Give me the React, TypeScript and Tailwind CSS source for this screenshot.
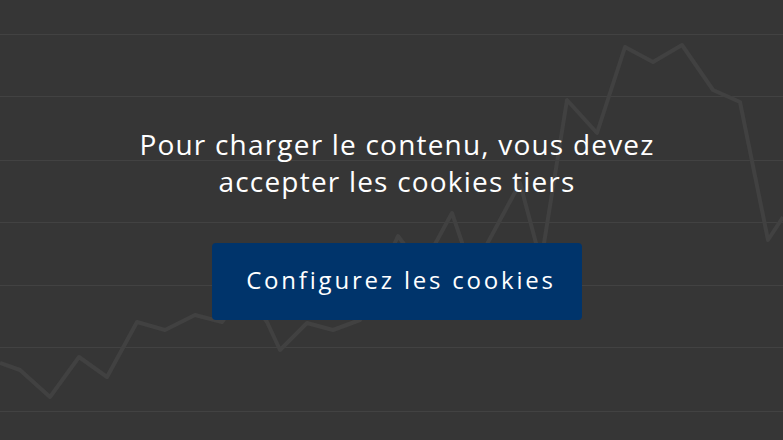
const gridLines = [34, 96, 160, 222, 285, 347, 411];

const chartPoints: [number, number][] = [
  [0, 363], [20, 370], [50, 397], [79, 357], [107, 377], [137, 322], [165, 330],
  [195, 315], [222, 322], [245, 290], [267, 322], [280, 350], [307, 323], [333, 330],
  [360, 320], [398, 236], [422, 268], [452, 213], [472, 272], [520, 183], [541, 262],
  [567, 100], [597, 133], [625, 47], [653, 62], [682, 45], [713, 90], [740, 102],
  [768, 240], [783, 217],
];

function ChartBackdrop() {
  return (
    <svg className="absolute inset-0 h-full w-full" viewBox="0 0 783 440" preserveAspectRatio="none">
      {gridLines.map((y) => (
        <line key={y} x1="0" x2="783" y1={y + 0.5} y2={y + 0.5} stroke="#424242" strokeWidth="1" />
      ))}
      <polyline
        points={chartPoints.map(([x, y]) => `${x},${y}`).join(" ")}
        fill="none"
        stroke="#414141"
        strokeWidth="4"
        strokeLinejoin="round"
      />
    </svg>
  );
}

export default function App() {
  return (
    <div className="relative h-[440px] w-full overflow-hidden bg-[#363636] font-['Open_Sans',sans-serif]">
      <ChartBackdrop />
      <div className="relative flex flex-col items-center pl-[11px] pt-[126px]">
        <p className="text-center text-[28px] leading-[37px] tracking-[1.2px] text-white">
          Pour charger le contenu, vous devez
          <br />
          accepter les cookies tiers
        </p>
        <button className="mt-[43px] flex h-[77px] w-[370px] items-center justify-center rounded-[4px] bg-[#00346b] pb-[3px] pl-[8px] text-[24px] tracking-[2.8px] text-white">
          Configurez les cookies
        </button>
      </div>
    </div>
  );
}
